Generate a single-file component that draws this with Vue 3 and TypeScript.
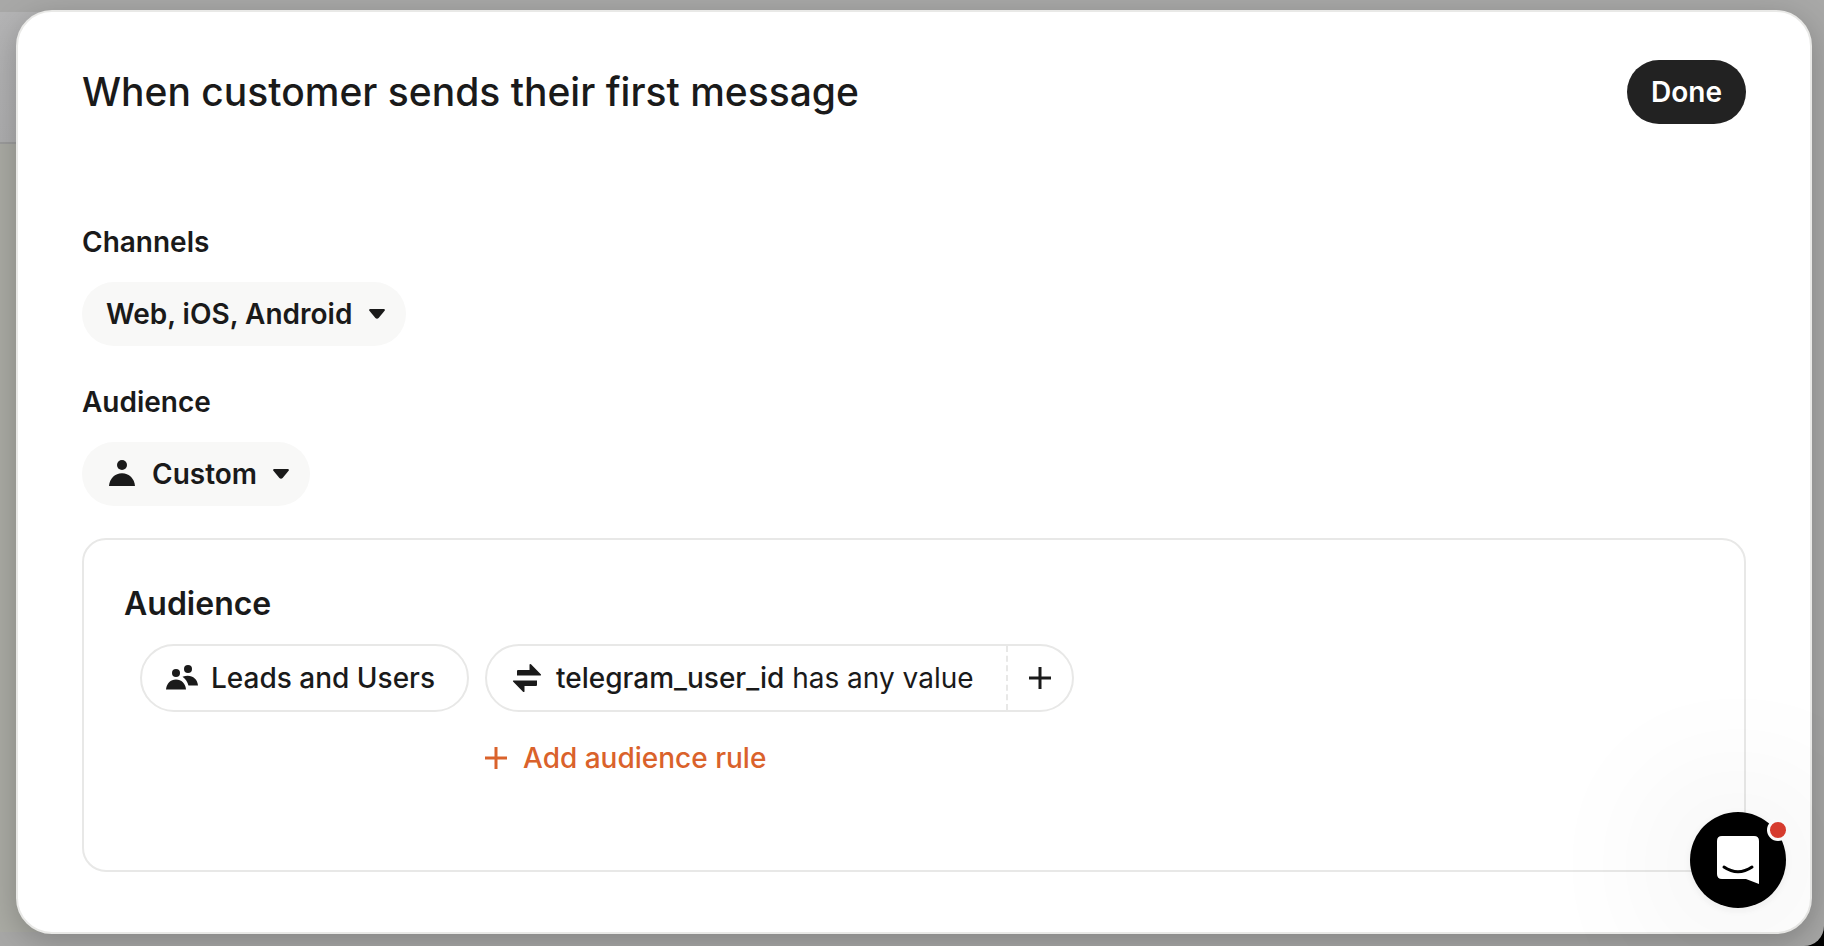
<script setup lang="ts">
import { ref } from 'vue'

const channels = ref('Web, iOS, Android')
const audience = ref('Custom')
const title = 'When customer sends their first message'
</script>

<template>
  <div class="backdrop">
    <main class="modal" role="dialog" aria-labelledby="modal-title">
      <header class="header">
        <h1 id="modal-title" class="title">{{ title }}</h1>
        <button type="button" class="done">Done</button>
      </header>

      <div class="field">
        <label class="label" for="channels">Channels</label>
        <div class="picker">
          <select id="channels" v-model="channels" class="select">
            <option>Web, iOS, Android</option>
          </select>
          <svg class="caret" viewBox="0 0 16 10" aria-hidden="true">
            <path d="M1.2 0H14.8Q16.4 .3 15.6 1.8L9.6 9Q8 10.6 6.4 9L.4 1.8Q-.4 .3 1.2 0Z" />
          </svg>
        </div>
      </div>

      <div class="field">
        <label class="label" for="audience">Audience</label>
        <div class="picker">
          <svg class="person" viewBox="0 0 32 32" aria-hidden="true">
            <circle cx="16" cy="7" r="5" />
            <path d="M3 28C3.600 20.500 9 15.300 16 15.300S28.400 20.500 29 28Z" />
          </svg>
          <select id="audience" v-model="audience" class="select">
            <option>Custom</option>
          </select>
          <svg class="caret" viewBox="0 0 16 10" aria-hidden="true">
            <path d="M1.2 0H14.8Q16.4 .3 15.6 1.8L9.6 9Q8 10.6 6.4 9L.4 1.8Q-.4 .3 1.2 0Z" />
          </svg>
        </div>
      </div>

      <section class="card" aria-labelledby="card-title">
        <h2 id="card-title" class="card-title">Audience</h2>
        <div class="rules">
          <button type="button" class="pill group">
            <svg class="icon" viewBox="0 0 32 32" aria-hidden="true">
              <circle cx="10" cy="11" r="4" />
              <path d="M0 27.500C.5 21.500 4.500 17.500 10 17.500S19.500 21.500 20 27.500Z" />
              <circle cx="22" cy="7" r="4" />
              <path d="M16.500 14.800C24 11.500 31.500 15.500 32 23.500H22.500C21.500 20 19.500 17 16.500 14.800Z" />
            </svg>
            <span>Leads and Users</span>
          </button>

          <div class="rule-column">
            <div class="pill rule">
              <button type="button" class="rule-main">
                <svg class="icon" viewBox="0 0 32 32" aria-hidden="true">
                  <path d="M7 8H18.500V2.500Q19 1.500 20 2.200L30 12.400Q30.400 13.500 29.400 13.500H6V9Q6 8 7 8Z" />
                  <path d="M25 24H13.500V29.500Q13 30.500 12 29.800L2 19.600Q1.600 18.500 2.600 18.500H26V23Q26 24 25 24Z" />
                </svg>
                <span><span class="attribute">telegram_user_id</span> has any value</span>
              </button>
              <button type="button" class="rule-add" aria-label="Add condition">
                <svg class="plus" viewBox="0 0 22 22" aria-hidden="true"><path d="M11 0V22M0 11H22" /></svg>
              </button>
            </div>
            <button type="button" class="add-rule">
              <svg class="plus" viewBox="0 0 22 22" aria-hidden="true"><path d="M11 0V22M0 11H22" /></svg>
              <span>Add audience rule</span>
            </button>
          </div>
        </div>
      </section>
    </main>

    <button type="button" class="launcher" aria-label="Open messenger">
      <svg class="chat" viewBox="0 0 42 48" aria-hidden="true">
        <path d="M5 0H37Q42 0 42 5V48L29 43H5Q0 43 0 38V5Q0 0 5 0Z" fill="#fff" />
        <path d="M7 31Q21 40.500 35 31" fill="none" stroke="#000" stroke-width="3" stroke-linecap="round" />
      </svg>
      <span class="badge"></span>
    </button>
  </div>
</template>

<style>
body {
  margin: 0;
  background: #000;
}
</style>

<style scoped>
* {
  box-sizing: border-box;
}

.backdrop {
  display: flex;
  min-height: 100vh;
  padding: 10px 12px 12px 16px;
  overflow: hidden;
  border-bottom-right-radius: 20px;
  background:
    linear-gradient(#b4b4b5, #aeaeaf) 0 12px / 40px 130px no-repeat,
    linear-gradient(#9c9c9c, #9c9c9c) 0 142px / 40px 2px no-repeat,
    linear-gradient(#aaaba4, #aaaba4) 0 144px / 40px 788px no-repeat,
    #a8a8a7;
  color: #1a1a1a;
  font-family: Inter, "Liberation Sans", sans-serif;
  font-size: 28px;
  line-height: 40px;
}

.modal {
  flex: 1;
  min-width: 0;
  padding: 48px 64px 60px;
  border: 2px solid #e9e9e7;
  border-radius: 36px;
  background: #fff;
  box-shadow: 0 8px 32px rgba(0, 0, 0, 0.22);
}

button,
select {
  margin: 0;
  padding: 0;
  border: 0;
  background: none;
  color: inherit;
  font: inherit;
  cursor: pointer;
}

.header {
  display: flex;
  align-items: center;
  justify-content: space-between;
  gap: 32px;
  margin-bottom: 98px;
}

.title {
  margin: 0;
  font-size: 39px;
  font-weight: 500;
  line-height: 48px;
}

.done {
  flex: none;
  height: 64px;
  padding: 0 24px;
  border-radius: 32px;
  background: #222;
  color: #fff;
  font-weight: 600;
}

.field {
  display: flex;
  flex-direction: column;
  align-items: flex-start;
  gap: 20px;
  margin-bottom: 36px;
}

.label {
  font-weight: 600;
}

.picker {
  display: flex;
  align-items: center;
  height: 64px;
  padding: 0 21px 0 24px;
  border-radius: 32px;
  background: #f8f8f7;
  font-weight: 600;
}

.select {
  appearance: none;
  height: 64px;
}

.caret {
  width: 16px;
  height: 10px;
  margin-left: 15px;
  pointer-events: none;
}

.person {
  width: 32px;
  height: 32px;
  margin-right: 14px;
}

.person,
.caret,
.icon {
  flex: none;
  fill: #1a1a1a;
}

.card {
  margin-top: -4px;
  padding: 44px 40px 92px;
  border: 2px solid #e8e8e7;
  border-radius: 24px;
}

.card-title {
  margin: 0 0 20px;
  font-size: 32px;
  font-weight: 600;
  line-height: 40px;
}

.rules {
  display: flex;
  align-items: flex-start;
  gap: 16px;
  padding-left: 16px;
}

.pill {
  display: flex;
  align-items: center;
  height: 68px;
  border: 2px solid #e8e8e7;
  border-radius: 34px;
}

.group {
  gap: 13px;
  padding: 0 32px 0 24px;
  font-weight: 500;
}

.icon {
  width: 32px;
  height: 32px;
}

.rule-column {
  display: flex;
  flex-direction: column;
  align-items: flex-start;
  gap: 26px;
}

.rule-main {
  display: flex;
  align-items: center;
  gap: 13px;
  height: 64px;
  padding: 0 32px 0 24px;
}

.attribute {
  font-weight: 500;
}

.rule-add {
  display: flex;
  align-items: center;
  justify-content: center;
  width: 66px;
  height: 64px;
  border-left: 2px dashed #e8e8e7;
}

.plus {
  width: 22px;
  height: 22px;
  fill: none;
  stroke: currentColor;
  stroke-width: 3;
}

.add-rule {
  display: flex;
  align-items: center;
  gap: 16px;
  color: #da622b;
  font-weight: 500;
}

.launcher {
  position: fixed;
  right: 38px;
  bottom: 38px;
  display: flex;
  align-items: center;
  justify-content: center;
  width: 96px;
  height: 96px;
  border-radius: 50%;
  background: #000;
  box-shadow:
    0 2px 12px rgba(0, 0, 0, 0.06),
    0 4px 160px rgba(0, 0, 0, 0.16);
}

.chat {
  width: 42px;
  height: 48px;
}

.badge {
  position: absolute;
  top: 7px;
  right: -3px;
  width: 22px;
  height: 22px;
  border: 3px solid #fafafa;
  border-radius: 50%;
  background: #d63b2e;
}
</style>
